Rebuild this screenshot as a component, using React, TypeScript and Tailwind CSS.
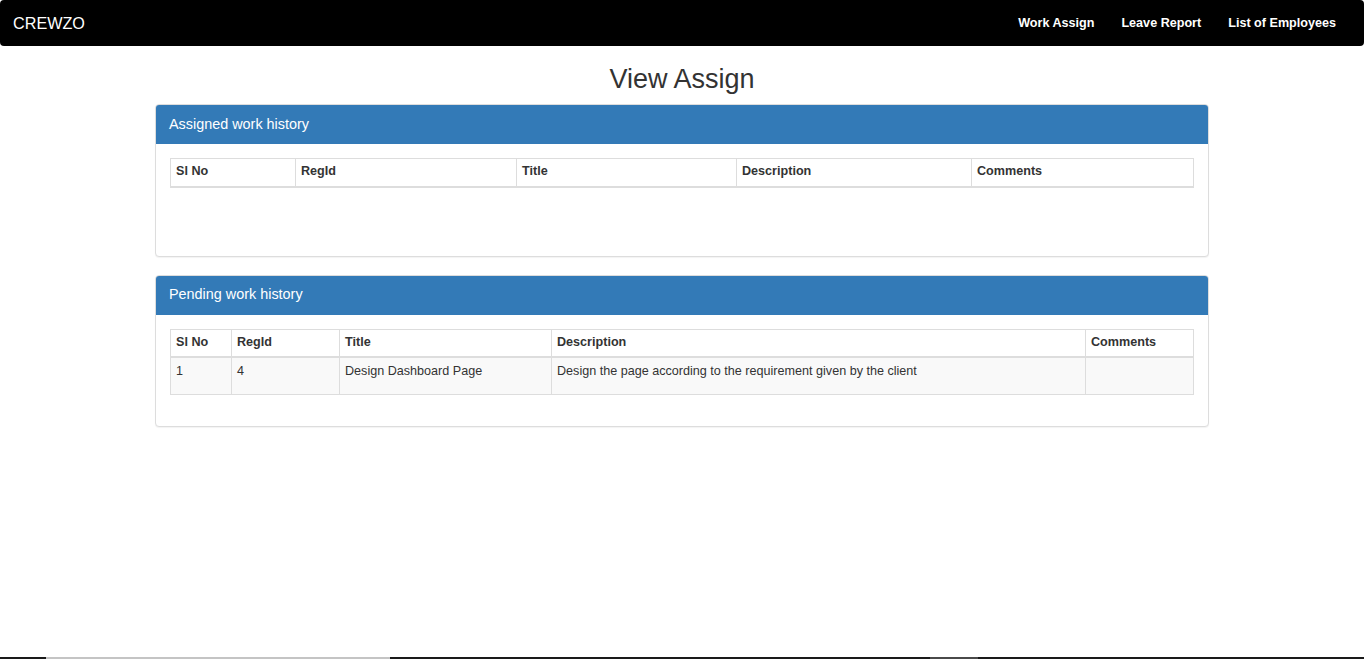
const assigned: string[][] = [];

const pending = [
  ["1", "4", "Design Dashboard Page", "Design the page according to the requirement given by the client", ""],
];

const heads = ["Sl No", "RegId", "Title", "Description", "Comments"];

const Panel = ({ title, widths, rows, bodyPad }: { title: string; widths: number[]; rows: string[][]; bodyPad: string }) => (
  <div className="w-[1054px] mx-auto border border-[#ddd] rounded-[4px] bg-white shadow-[0_1px_1px_rgba(0,0,0,0.05)] mb-[18px]">
    <div className="h-[39px] bg-[#337ab7] rounded-t-[3px] flex items-center px-[13px] text-white text-[14.4px]">
      {title}
    </div>
    <div className={`px-[14px] pt-[14px] ${bodyPad}`}>
      <table className="w-full table-fixed border-collapse border border-[#ddd] text-[12.6px] text-[#333]">
        <colgroup>
          {widths.map((w, i) => (
            <col key={i} style={{ width: w }} />
          ))}
        </colgroup>
        <thead>
          <tr>
            {heads.map((h) => (
              <th key={h} className="h-[28px] border border-[#ddd] border-b-2 px-[5px] pt-0 pb-[2px] text-left font-bold align-middle leading-[18px]">
                {h}
              </th>
            ))}
          </tr>
        </thead>
        <tbody>
          {rows.map((r, i) => (
            <tr key={i} className={i % 2 == 0 ? "bg-[#f9f9f9]" : ""}>
              {r.map((c, j) => (
                <td key={j} className="h-[37px] border border-[#ddd] px-[5px] pt-[4px] pb-[14px] align-top leading-[18px]">
                  {c}
                </td>
              ))}
            </tr>
          ))}
        </tbody>
      </table>
    </div>
  </div>
);

export default function App() {
  return (
    <div className="h-screen flex flex-col bg-white font-['Liberation_Sans',Arial,sans-serif] text-[#333]">
      <div className="flex-1">
        {/* Navbar */}
        <nav className="h-[46px] bg-black rounded-[4px] flex items-center justify-between pl-[13px] pr-[28px]">
          <span className="text-white text-[16.2px] leading-none">CREWZO</span>
          <div className="flex items-center gap-[27px] text-white text-[12.6px] font-bold">
            <a>Work Assign</a>
            <a>Leave Report</a>
            <a>List of Employees</a>
          </div>
        </nav>

        <h2 className="text-center text-[27px] leading-[30px] mt-[18px] mb-[10px] font-normal">View Assign</h2>

        <Panel title="Assigned work history" widths={[125, 221, 220, 235, 222]} rows={assigned} bodyPad="pb-[68px]" />
        <Panel title="Pending work history" widths={[61, 108, 212, 534, 108]} rows={pending} bodyPad="pb-[31px]" />
      </div>

      {/* bottom strip */}
      <div className="h-[2px] flex">
        <div className="w-[46px] bg-[#1a1a1a]" />
        <div className="w-[344px] bg-[#c4c4c4]" />
        <div className="w-[540px] bg-[#1a1a1a]" />
        <div className="w-[48px] bg-[#4a4a4a]" />
        <div className="flex-1 bg-[#1a1a1a]" />
      </div>
    </div>
  );
}
